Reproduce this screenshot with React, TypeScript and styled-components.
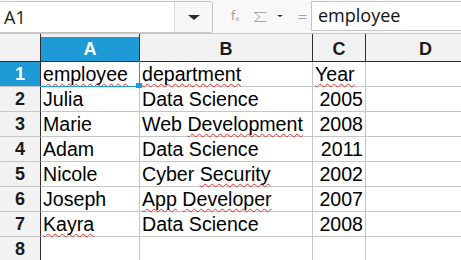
import { createGlobalStyle } from "styled-components";
import styled from "styled-components";

const GlobalStyle = createGlobalStyle`
  body {
    margin: 0;
    background: #ffffff;
    overflow: hidden;
  }
`;

const BLUE = "#1e9ad6";

const Page = styled.div`
  width: 461px;
  height: 260px;
  overflow: hidden;
  font-family: "Liberation Sans", Arial, sans-serif;
`;

// Formula bar
const Toolbar = styled.div`
  display: flex;
  align-items: flex-start;
  height: 33px;
  background: #f8f8f8;
  border-bottom: 1px solid #c6c6c6;
`;

const NameBox = styled.div`
  display: flex;
  width: 215px;
  height: 32px;
  margin-top: 1px;
  margin-left: -2px;
  box-sizing: border-box;
  background: #ffffff;
  border: 1px solid #c4c4c4;
  border-radius: 3px;
`;

const NameInput = styled.div`
  flex: 1;
  padding-left: 5px;
  font-family: "Open Sans", "Noto Sans", sans-serif;
  font-size: 18px;
  line-height: 30px;
  color: #1a1a1a;
`;

const DropButton = styled.div`
  display: flex;
  align-items: center;
  justify-content: center;
  width: 37px;
  border-left: 1px solid #d6d6d6;
  background: #f7f7f7;
  border-radius: 0 3px 3px 0;
`;

const Triangle = styled.span<{ $size: number }>`
  width: 0;
  height: 0;
  border-left: ${(p) => p.$size}px solid transparent;
  border-right: ${(p) => p.$size}px solid transparent;
  border-top: ${(p) => Math.round(p.$size * 0.75)}px solid #2b2b2b;
`;

const Tools = styled.div`
  display: flex;
  align-items: center;
  height: 32px;
  width: 98px;
  box-sizing: border-box;
  padding-left: 18px;
  color: #a0a0a0;
  font-family: "DejaVu Sans", sans-serif;
`;

const FxIcon = styled.span`
  width: 22px;
  font-size: 12px;
  color: #9a9a9a;
  sub {
    font-size: 7px;
    vertical-align: -1px;
  }
`;

const SumIcon = styled.svg`
  width: 15px;
  height: 12px;
  margin-right: 9px;
  margin-top: 1px;
`;

const SumDrop = styled.span`
  display: flex;
  width: 20px;
`;

const Equals = styled.span`
  font-size: 13px;
  color: #a6a6a6;
  width: 14px;
`;

const FormulaInput = styled.div`
  flex: 1;
  height: 30px;
  margin-top: 1px;
  box-sizing: border-box;
  background: #ffffff;
  border: 1px solid #c4c4c4;
  border-right: none;
  padding-left: 6px;
  font-family: "Open Sans", "Noto Sans", sans-serif;
  font-size: 18px;
  line-height: 27px;
  color: #111;
`;

// Grid
const Sheet = styled.div`
  display: grid;
  grid-template-columns: 41px 99px 173px 53px 120px;
  grid-auto-rows: 25px;
  grid-template-rows: 28px;
  position: relative;
`;

const Corner = styled.div`
  background: #f2f2f2;
  border-right: 1px solid #2e2e2e;
  border-bottom: 1px solid #2e2e2e;
`;

const ColHead = styled.div<{ $active?: boolean }>`
  display: flex;
  align-items: center;
  justify-content: center;
  padding-top: 3px;
  box-sizing: border-box;
  background: ${(p) =>
    p.$active ? `linear-gradient(#f2f2f2 0 3px, ${BLUE} 3px)` : "#f2f2f2"};
  color: ${(p) => (p.$active ? "#ffffff" : "#1a1a1a")};
  border-right: 1px solid #2e2e2e;
  border-bottom: 1px solid #2e2e2e;
  font-size: 18px;
  font-weight: 700;
`;

const RowHead = styled.div<{ $active?: boolean }>`
  display: flex;
  align-items: center;
  justify-content: center;
  background: ${(p) => (p.$active ? BLUE : "#f2f2f2")};
  color: ${(p) => (p.$active ? "#ffffff" : "#1a1a1a")};
  border-right: 1px solid #2e2e2e;
  border-bottom: 1px solid #c6c6c6;
  font-size: 18px;
  font-weight: 700;
`;

const Cell = styled.div<{ $num?: boolean }>`
  box-sizing: border-box;
  padding: 1px ${(p) => (p.$num ? "2px" : "0")} 0 ${(p) => (p.$num ? "0" : "2px")};
  text-align: ${(p) => (p.$num ? "right" : "left")};
  border-right: 1px solid #c6c6c6;
  border-bottom: 1px solid #c6c6c6;
  font-size: 19.6px;
  line-height: 23px;
  color: #000;
  white-space: nowrap;
`;

const Misspelled = styled.span`
  text-decoration-line: underline;
  text-decoration-style: wavy;
  text-decoration-color: #e8312f;
  text-decoration-thickness: 1px;
  text-underline-offset: 2px;
  text-decoration-skip-ink: none;
`;

const CursorFrame = styled.div`
  position: absolute;
  left: 40px;
  top: 27px;
  width: 100px;
  height: 26px;
  box-sizing: border-box;
  border-right: 1px solid ${BLUE};
  border-bottom: 1px solid ${BLUE};
  pointer-events: none;
`;

const Handle = styled.div`
  position: absolute;
  left: 136px;
  top: 49px;
  width: 6px;
  height: 5px;
  background: ${BLUE};
`;

type Piece = string | { bad: string };
type Row = { name: Piece[]; dept: Piece[]; year: string; yearText?: boolean };

const rows: Row[] = [
  { name: [{ bad: "employee" }], dept: [{ bad: "department" }], year: "Year", yearText: true },
  { name: ["Julia"], dept: ["Data Science"], year: "2005" },
  { name: ["Marie"], dept: ["Web ", { bad: "Development" }], year: "2008" },
  { name: ["Adam"], dept: ["Data Science"], year: "2011" },
  { name: ["Nicole"], dept: ["Cyber ", { bad: "Security" }], year: "2002" },
  { name: ["Joseph"], dept: [{ bad: "App" }, " ", { bad: "Developer" }], year: "2007" },
  { name: [{ bad: "Kayra" }], dept: ["Data Science"], year: "2008" },
];

const renderPieces = (pieces: Piece[]) =>
  pieces.map((p, i) =>
    typeof p === "string" ? <span key={i}>{p}</span> : <Misspelled key={i}>{p.bad}</Misspelled>
  );

function RowFragment({ index, row }: { index: number; row: Row }) {
  return (
    <>
      <RowHead $active={index === 1}>{index}</RowHead>
      <Cell>{renderPieces(row.name)}</Cell>
      <Cell>{renderPieces(row.dept)}</Cell>
      <Cell $num={!row.yearText}>
        {row.yearText ? <Misspelled>{row.year}</Misspelled> : row.year}
      </Cell>
      <Cell />
    </>
  );
}

export default function App() {
  return (
    <Page>
      <GlobalStyle />
      <Toolbar>
        <NameBox>
          <NameInput>A1</NameInput>
          <DropButton>
            <Triangle $size={6} />
          </DropButton>
        </NameBox>
        <Tools>
          <FxIcon>
            f<sub>x</sub>
          </FxIcon>
          <SumIcon viewBox="0 0 15 12">
            <path d="M13.5 1.5 H1.5 L7 6 L1.5 10.5 H13.5" fill="none" stroke="#a4a4a4" strokeWidth="1" />
          </SumIcon>
          <SumDrop>
            <Triangle $size={3} />
          </SumDrop>
          <Equals>=</Equals>
        </Tools>
        <FormulaInput>employee</FormulaInput>
      </Toolbar>
      <Sheet>
        <Corner />
        <ColHead $active>A</ColHead>
        <ColHead>B</ColHead>
        <ColHead>C</ColHead>
        <ColHead>D</ColHead>
        {rows.map((r, i) => (
          <RowFragment key={i} index={i + 1} row={r} />
        ))}
        <RowHead>8</RowHead>
        <Cell />
        <Cell />
        <Cell />
        <Cell />
        <CursorFrame />
        <Handle />
      </Sheet>
    </Page>
  );
}
